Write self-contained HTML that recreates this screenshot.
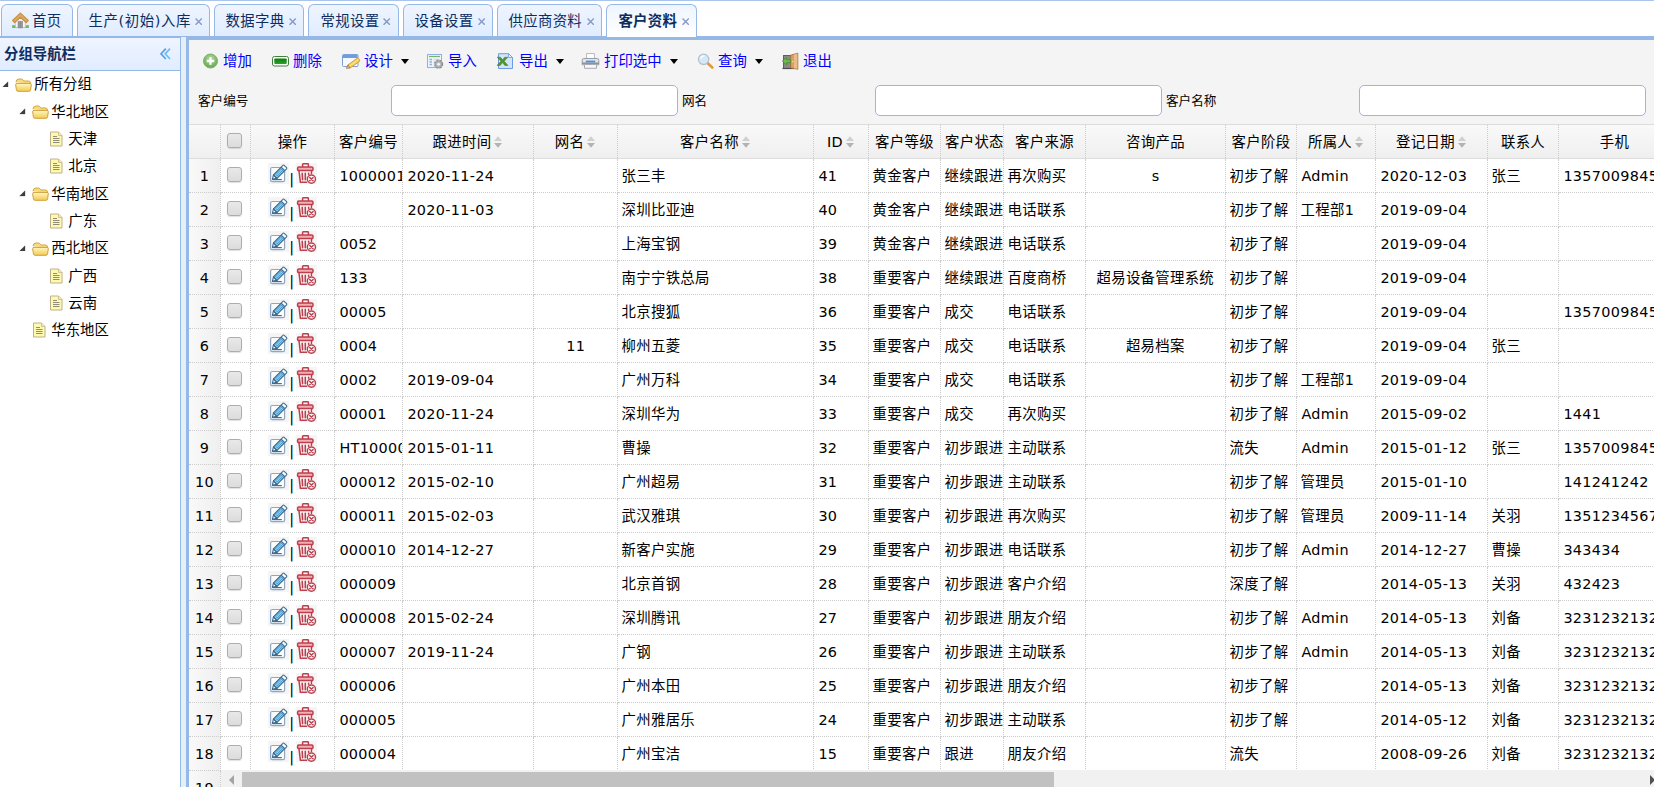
<!DOCTYPE html>
<html lang="zh-CN">
<head>
<meta charset="utf-8">
<title>客户资料</title>
<style>
html,body{margin:0;padding:0}
body{width:1654px;height:787px;overflow:hidden;background:#fff;position:relative;font-family:"DejaVu Sans","Noto Sans CJK SC",sans-serif;font-size:14.4px;color:#000}
div,span,a{box-sizing:border-box}
.abs{position:absolute}
/* tabs */
#tabs{position:absolute;left:0;top:0;width:1654px;height:38px;background:#fff;border-top:1px solid #a9c5ec;border-bottom:2px solid #95b8e7}
.tab{position:absolute;top:3px;height:32px;border:1px solid #95b8e7;border-bottom:0;border-radius:6px 6px 0 0;background:linear-gradient(#eff5ff,#e0ecff);color:#0e2d5f;line-height:33px;white-space:nowrap;font-size:14.4px}
.tab.sel{background:linear-gradient(#eff5ff,#fff);font-weight:bold;height:33px}
.tab span.t{position:absolute;top:0;letter-spacing:.3px}
.tab .x{position:absolute;top:12.5px;width:7.4px;height:7.4px}
/* west */
#west{position:absolute;left:0;top:38px;width:181px;height:749px;border-right:1px solid #95b8e7;background:#fff}
#whead{position:absolute;left:0;top:0;width:180px;height:33px;background:linear-gradient(#eff5ff,#e0ecff);border-bottom:1px solid #95b8e7}
#whead b{position:absolute;left:4px;top:0;line-height:32px;color:#0e2d5f;font-size:14.4px}
#split{position:absolute;left:181px;top:37px;width:5px;height:750px;background:#e6eef8}
.tn{position:absolute;height:22px;line-height:22px;white-space:nowrap;font-size:14.4px}
.ta{position:absolute;top:7.5px;margin-left:-.5px;width:6.5px;height:6.5px}.tf{position:absolute;top:4.5px;width:17px;height:14px}.tfi{position:absolute;top:3px;width:17px;height:16px}
/* center */
#center{position:absolute;left:186px;top:38px;width:1468px;height:749px;border-left:3px solid #95b8e7;border-top:2px solid #95b8e7;background:#fff}
#tb{position:absolute;left:189px;top:40px;width:1465px;height:84px;background:#f4f4f4}
#tbline{position:absolute;left:189px;top:124px;width:1465px;height:1px;background:#ddd}
.btn{position:absolute;top:51px;height:20px;line-height:20px;color:#00f;font-size:14.4px;white-space:nowrap}
.ti{position:absolute;top:51px;width:20px;height:20px}
.arr{position:absolute;top:59px;width:0;height:0;border:4.8px solid transparent;border-top:5px solid #000;border-bottom:0}
.lbl{position:absolute;top:92.5px;font-size:12.6px;line-height:16px;white-space:nowrap}
.inp{position:absolute;top:85px;width:287px;height:31px;border:1px solid #95b8e7;border-radius:5px;background:#fff}
/* grid */
.ghead{position:absolute;left:0;top:125px;width:1654px;height:34px}
#ghbg{position:absolute;left:189px;top:125px;width:1465px;height:34px;background:linear-gradient(#f9f9f9,#efefef);border-bottom:1px solid #ddd}
.hc{position:absolute;top:0;height:33px;border-right:1px dotted #ccc;text-align:center;line-height:35px;white-space:nowrap;overflow:hidden;padding:0 4px;letter-spacing:.3px}
.hc .st{width:10px;height:14px;vertical-align:-2px;margin-left:2px}
.gr{position:absolute;left:0;width:1654px;height:34px}
.c{position:absolute;top:0;height:34px;border-right:1px dotted #ccc;border-bottom:1px dotted #ccc;line-height:34.6px;padding:0 4px 0 3.6px;white-space:nowrap;overflow:hidden;letter-spacing:.3px}
.c.n{letter-spacing:.32px;padding-left:4.4px}.c.ce{text-align:center}
.c.rn{text-align:center;padding:0;background:linear-gradient(90deg,#f9f9f9,#efefef)}
.cb{display:inline-block;width:15px;height:15px;border:1px solid #adadad;border-radius:3px;background:linear-gradient(#e9e9e9,#dcdcdc);vertical-align:-.5px;margin-left:-1.5px;box-shadow:0 1px 1px rgba(0,0,0,.12)}
.ic{width:21px;height:21px;vertical-align:-3.4px}.bar+.ic{margin-left:1px}
.bar{display:inline-block;width:6px;text-align:center;position:relative;top:3px}
#hs{position:absolute;left:221px;top:770px;width:1433px;height:17px;background:#f1f1f1}
#hs i{position:absolute;left:21px;top:2px;width:812px;height:15px;background:#c1c1c1}#hs b{position:absolute;top:5px;width:0;height:0;border:5.5px solid transparent}
</style>
</head>
<body>
<svg width="0" height="0" style="position:absolute">
<defs>
<symbol id="folder" viewBox="0 0 17 14"><defs><linearGradient id="fg" x1="0" y1="0" x2="0" y2="1"><stop offset="0" stop-color="#fff7c4"/><stop offset="1" stop-color="#f2cb52"/></linearGradient></defs><path d="M1 4.2Q1 1.2 4 1H6.4Q7.6 1 8.2 2.2L8.8 3H13.5Q15.4 3 15.5 5V6" fill="#f6dc7c" stroke="#d3a541" stroke-width="1"/><path d="M.7 6.8Q.5 5.4 2 5.4H15Q16.5 5.4 16.3 6.8L15.6 11.8Q15.4 13.3 13.9 13.3H3.1Q1.6 13.3 1.4 11.8Z" fill="url(#fg)" stroke="#cf9f3b" stroke-width="1"/></symbol>
<symbol id="file" viewBox="0 0 17 16"><path d="M2.5 1H10.5L14 4.5V15H2.5Z" fill="#fdfab0" stroke="#bfb08c" stroke-width="1"/><path d="M10.5 1V4.5H14" fill="#f3e9b0" stroke="#c7b68a" stroke-width=".8"/><path d="M5 5.5H9M5 7.5H11.5M5 9.5H11.5M5 11.5H11.5" stroke="#8f8c78" stroke-width="1"/></symbol>
<symbol id="ar" viewBox="0 0 7 7"><path d="M6.8 .2V6.8H.2Z" fill="#3d3d3d"/></symbol>
<symbol id="so" viewBox="0 0 10 14"><path d="M5 1.2L9 6H1Z" fill="#cfcfcf"/><path d="M5 12.8L9 8H1Z" fill="#b3b3b3"/></symbol>
<symbol id="ed" viewBox="0 0 21 21"><rect width="21" height="21" fill="#f5f5f5"/><rect x="2.6" y="4.5" width="14" height="14.2" rx="1.6" fill="#fbfcfd" stroke="#8fa8c1" stroke-width="1.2"/><path d="M4.5 16.6H13.8" stroke="#456f93" stroke-width="1.2"/><path d="M4.4 16.4L5.46 11.8L9 15.34Z" fill="#f4f8fb" stroke="#3a668c" stroke-width="1.1" stroke-linejoin="round"/><path d="M5.46 11.8L13.23 4.03L16.77 7.57L9 15.34Z" fill="#7fd1f7" stroke="#36648b" stroke-width="1.1" stroke-linejoin="round"/><path d="M7.9 11.6L13.3 6.2L14.6 7.5L9.2 12.9Z" fill="none" stroke="#3f8fc2" stroke-width=".8"/><path d="M13.23 4.03L15.1 2.2Q15.6 1.7 16.2 2.3L18.6 4.7Q19.1 5.3 18.6 5.8L16.77 7.57Z" fill="#fdfeff" stroke="#3f6f97" stroke-width="1.1" stroke-linejoin="round"/></symbol>
<symbol id="de" viewBox="0 0 21 21"><rect width="21" height="21" fill="#f5f5f5"/><g fill="none" stroke="#bd3f4e" stroke-width="1.5" stroke-linecap="round"><path d="M6.6 3.6V1.5Q6.6 .8 7.3 .8H11.7Q12.4 .8 12.4 1.5V3.6"/><path d="M3 8L4.4 19.2H10.6"/><path d="M15.6 8L15.4 10.4"/><path d="M6.2 10.4L6.6 16.8M9.3 10.4V16.8M12.6 10.4V11.2" stroke-width="1.6"/><circle cx="15.4" cy="16.1" r="4.1" stroke-width="1.4"/><path d="M13.7 14.4L17.1 17.8M17.1 14.4L13.7 17.8" stroke-width="1.4"/></g><rect x="1.6" y="4.1" width="15.4" height="3.5" rx="1.2" fill="#f4adb0" stroke="#bd3f4e" stroke-width="1.5"/></symbol>
</defs>
</svg>
<div id="tabs">
<div class="tab" style="left:1px;width:72px"><span class="t" style="left:30px">首页</span></div>
<div class="tab" style="left:77px;width:133px"><span class="t" style="left:10.6px;letter-spacing:.6px">生产(初始)入库</span><svg class="x" style="left:116.7px" viewBox="0 0 8 8"><path d="M.6 .6L7.4 7.4M7.4 .6L.6 7.4" stroke="#8799c6" stroke-width="1.5"/></svg></div>
<div class="tab" style="left:214px;width:90px"><span class="t" style="left:10.6px">数据字典</span><svg class="x" style="left:73.7px" viewBox="0 0 8 8"><path d="M.6 .6L7.4 7.4M7.4 .6L.6 7.4" stroke="#8799c6" stroke-width="1.5"/></svg></div>
<div class="tab" style="left:308px;width:91px"><span class="t" style="left:11.6px">常规设置</span><svg class="x" style="left:74.2px" viewBox="0 0 8 8"><path d="M.6 .6L7.4 7.4M7.4 .6L.6 7.4" stroke="#8799c6" stroke-width="1.5"/></svg></div>
<div class="tab" style="left:403px;width:90px"><span class="t" style="left:10.6px">设备设置</span><svg class="x" style="left:73.7px" viewBox="0 0 8 8"><path d="M.6 .6L7.4 7.4M7.4 .6L.6 7.4" stroke="#8799c6" stroke-width="1.5"/></svg></div>
<div class="tab" style="left:497px;width:105px"><span class="t" style="left:10.6px">供应商资料</span><svg class="x" style="left:88.7px" viewBox="0 0 8 8"><path d="M.6 .6L7.4 7.4M7.4 .6L.6 7.4" stroke="#8799c6" stroke-width="1.5"/></svg></div>
<div class="tab sel" style="left:606px;width:91px"><span class="t" style="left:11.4px">客户资料</span><svg class="x" style="left:74.7px" viewBox="0 0 8 8"><path d="M.6 .6L7.4 7.4M7.4 .6L.6 7.4" stroke="#8799c6" stroke-width="1.5"/></svg></div>
</div>
<svg style="position:absolute;left:11px;top:12px;width:19px;height:17px" viewBox="0 0 19 17"><path d="M1.2 13.2Q3.6 12.6 5.8 14.6L6 16H1.2ZM17.8 13.2Q15.4 12.6 13.2 14.6L13 16H17.8Z" fill="#6db85a"/><path d="M4.4 8.4L9.4 3.6L14.4 8.4V15.6H4.4Z" fill="#f4f4f4" stroke="#b9b9b9" stroke-width=".7"/><path d="M7.1 9.4H11.5V15.8H7.1Z" fill="#9a9a9a" stroke="#7c7c7c" stroke-width=".6"/><path d="M9.3 9.6V15.6" stroke="#7a7a7a" stroke-width=".6"/><path d="M1.6 8.4L9.4 1.1L17.2 8.4L15.2 10.6L9.4 5.2L3.6 10.6Z" fill="#dcaa62" stroke="#c89048" stroke-width="1.3" stroke-linejoin="round"/></svg>
<div id="west">
<div id="whead"><b>分组导航栏</b><svg style="position:absolute;left:160px;top:10px;width:14px;height:12px" viewBox="0 0 14 12"><path d="M5.8 .6L1 5.8L5.8 11" fill="none" stroke="#5a9fe2" stroke-width="1.7"/><path d="M10 .6L5.2 5.8L10 11" fill="none" stroke="#6bbcf6" stroke-width="1.7"/></svg></div>
</div>
<div id="split"></div>
<div id="center"></div>
<div id="tb"></div><div id="tbline"></div>
<svg class="ti" style="left:201px" viewBox="0 0 20 20"><defs><radialGradient id="ga" cx=".5" cy=".35" r=".7"><stop offset="0" stop-color="#b5dca4"/><stop offset="1" stop-color="#5ea04a"/></radialGradient></defs><circle cx="9.5" cy="10" r="7" fill="url(#ga)" stroke="#7db36b" stroke-width="1"/><path d="M9.5 6.3V13.7M5.8 10H13.2" stroke="#fff" stroke-width="2.3"/></svg>
<a class="btn" style="left:223px">增加</a>
<svg class="ti" style="left:271px" viewBox="0 0 20 20"><defs><linearGradient id="gr" x1="0" y1="0" x2="0" y2="1"><stop offset="0" stop-color="#0a7a0a"/><stop offset="1" stop-color="#2ba32b"/></linearGradient></defs><rect x="1.5" y="5.5" width="16" height="9.5" rx="2" fill="#fff" stroke="#3f7f3f" stroke-width="1"/><rect x="3.3" y="7.4" width="12.4" height="5.7" rx=".8" fill="url(#gr)"/></svg>
<a class="btn" style="left:293px">删除</a>
<svg class="ti" style="left:341px" viewBox="0 0 20 20"><rect x="1.5" y="3.5" width="15.5" height="12" rx="1" fill="#f6f9fd" stroke="#7d9fd2"/><rect x="2" y="4" width="14.5" height="3" fill="#6d9ee4"/><path d="M6.9 13.9L16.6 6.95Q18.6 7.6 18.8 10.05L9.1 17Z" fill="#f8d256" stroke="#cf9630" stroke-width=".9" stroke-linejoin="round"/><path d="M8 15.4L17.6 8.6" stroke="#fbe79a" stroke-width="1"/><path d="M5.4 17.4L6.9 13.9L9.1 17Z" fill="#e6c39a" stroke="#a46c36" stroke-width=".7" stroke-linejoin="round"/></svg>
<a class="btn" style="left:364px">设计</a><i class="arr" style="left:401px"></i>
<svg class="ti" style="left:426px" viewBox="0 0 20 20"><rect x="1.5" y="3.5" width="14" height="13" fill="#eef4fc" stroke="#8fb0e0"/><path d="M3 5.5H14" stroke="#79b562" stroke-width="1.2"/><path d="M3.5 8.5H6M3.5 11H6M3.5 13.5H6" stroke="#8fb0e0" stroke-width="1.4"/><path d="M7.5 8.5H13.5M7.5 11H10M7.5 13.5H9" stroke="#c9dbf3" stroke-width="1.4"/><circle cx="12.6" cy="13.2" r="3.6" fill="#c4c4c4" stroke="#8e8e8e" stroke-width="2" stroke-dasharray="1.9 1"/><circle cx="12.6" cy="13.2" r="3.1" fill="#bdbdbd" stroke="#9a9a9a" stroke-width=".8"/><circle cx="12.6" cy="13.2" r="1.3" fill="#f4f8ff"/></svg>
<a class="btn" style="left:448px">导入</a>
<svg class="ti" style="left:496px" viewBox="0 0 20 20"><path d="M2.5 2.7H12.5L16.5 6.5V17.5H2.5Z" fill="#d3e3f8" stroke="#6f9be0"/><path d="M12.5 2.7V6.5H16.5Z" fill="#f1f6fd" stroke="#6f9be0" stroke-width=".8"/><path d="M1.2 6.2H4.4L6.6 8.8L8.8 6.2H11.8L8.2 10.2L12 14.4H8.8L6.5 11.6L4.2 14.4H1L4.9 10.2Z" fill="#4f962f" stroke="#3b7a22" stroke-width=".5"/></svg>
<a class="btn" style="left:519px">导出</a><i class="arr" style="left:556px"></i>
<svg class="ti" style="left:581px" viewBox="0 0 20 20"><path d="M5.5 2.5H13.5V8H5.5Z" fill="#fdfdfd" stroke="#b9bcc2"/><path d="M2.8 7.5H16.2Q17.8 7.5 17.8 9.2V13.8H1.2V9.2Q1.2 7.5 2.8 7.5Z" fill="#e3e4e8" stroke="#9a9ca3"/><path d="M4.8 9.6H14.2V11.4H4.8Z" fill="#3a97ea"/><path d="M1.2 12.2H17.8" stroke="#7b7d84" stroke-width="1.2"/><path d="M3.5 13.5H15.5V17.3H3.5Z" fill="#f7f7f7" stroke="#a9abb2"/></svg>
<a class="btn" style="left:604px">打印选中</a><i class="arr" style="left:670px"></i>
<svg class="ti" style="left:696px" viewBox="0 0 20 20"><path d="M11.5 12L16.3 16.5" stroke="#e09a3a" stroke-width="2.6" stroke-linecap="round"/><circle cx="7.6" cy="8.3" r="5.2" fill="#d3e9fb" stroke="#b4c0cc" stroke-width="1.3"/><path d="M4.6 7.6Q5.4 4.9 8.4 4.9" stroke="#fff" stroke-width="1.4" fill="none"/></svg>
<a class="btn" style="left:718px">查询</a><i class="arr" style="left:755px"></i>
<svg class="ti" style="left:781px" viewBox="0 0 20 20"><rect x="2.5" y="4.5" width="9" height="13" fill="#8a8a8a" stroke="#5f5f5f"/><path d="M1.5 17.5H13" stroke="#4c4c4c" stroke-width="1.2"/><path d="M9.6 4.2L16.8 2.2V18.2L9.6 17Z" fill="#d9a066" stroke="#a86f33" stroke-width=".9"/><path d="M13 3.4L16.4 2.5V17.8L13 17.3Z" fill="#e8bd8a"/><circle cx="11.6" cy="10.6" r=".8" fill="#f5e08a"/><path d="M1.3 10.2L5.6 6.6V8.8H9.6V11.6H5.6V13.8Z" fill="#6cc04a" stroke="#3e8a2a" stroke-width=".7"/></svg>
<a class="btn" style="left:803px">退出</a>
<span class="lbl" style="left:198px">客户编号</span><div class="inp" style="left:391px"></div>
<span class="lbl" style="left:682px">网名</span><div class="inp" style="left:875px"></div>
<span class="lbl" style="left:1166px">客户名称</span><div class="inp" style="left:1359px"></div>
<div id="ghbg"></div>
<div class="tn" style="top:73.4px;left:0">
<svg class="ta" style="left:2.5px"><use href="#ar"/></svg><svg class="tf" style="left:15.0px"><use href="#folder"/></svg>
<span style="position:absolute;left:34.3px">所有分组</span></div>
<div class="tn" style="top:100.7px;left:0">
<svg class="ta" style="left:19.5px"><use href="#ar"/></svg><svg class="tf" style="left:32.0px"><use href="#folder"/></svg>
<span style="position:absolute;left:51.3px">华北地区</span></div>
<div class="tn" style="top:128.0px;left:0">
<svg class="tfi" style="left:48.0px"><use href="#file"/></svg>
<span style="position:absolute;left:68.3px">天津</span></div>
<div class="tn" style="top:155.3px;left:0">
<svg class="tfi" style="left:48.0px"><use href="#file"/></svg>
<span style="position:absolute;left:68.3px">北京</span></div>
<div class="tn" style="top:182.6px;left:0">
<svg class="ta" style="left:19.5px"><use href="#ar"/></svg><svg class="tf" style="left:32.0px"><use href="#folder"/></svg>
<span style="position:absolute;left:51.3px">华南地区</span></div>
<div class="tn" style="top:209.9px;left:0">
<svg class="tfi" style="left:48.0px"><use href="#file"/></svg>
<span style="position:absolute;left:68.3px">广东</span></div>
<div class="tn" style="top:237.2px;left:0">
<svg class="ta" style="left:19.5px"><use href="#ar"/></svg><svg class="tf" style="left:32.0px"><use href="#folder"/></svg>
<span style="position:absolute;left:51.3px">西北地区</span></div>
<div class="tn" style="top:264.5px;left:0">
<svg class="tfi" style="left:48.0px"><use href="#file"/></svg>
<span style="position:absolute;left:68.3px">广西</span></div>
<div class="tn" style="top:291.8px;left:0">
<svg class="tfi" style="left:48.0px"><use href="#file"/></svg>
<span style="position:absolute;left:68.3px">云南</span></div>
<div class="tn" style="top:319.1px;left:0">
<svg class="tfi" style="left:31.0px"><use href="#file"/></svg>
<span style="position:absolute;left:51.3px">华东地区</span></div><div class="ghead">
<div class="hc" style="left:189px;width:32px"><span></span></div>
<div class="hc" style="left:221px;width:30px"><span class="cb"></span></div>
<div class="hc" style="left:251px;width:84px"><span>操作</span></div>
<div class="hc" style="left:335px;width:68px"><span>客户编号</span></div>
<div class="hc" style="left:403px;width:131px"><span>跟进时间</span><svg class="st"><use href="#so"/></svg></div>
<div class="hc" style="left:534px;width:84px"><span>网名</span><svg class="st"><use href="#so"/></svg></div>
<div class="hc" style="left:618px;width:196px"><span>客户名称</span><svg class="st"><use href="#so"/></svg></div>
<div class="hc" style="left:814px;width:55px"><span>ID</span><svg class="st"><use href="#so"/></svg></div>
<div class="hc" style="left:869px;width:72px"><span>客户等级</span></div>
<div class="hc" style="left:941px;width:63px"><span>客户状态</span></div>
<div class="hc" style="left:1004px;width:82px"><span>客户来源</span></div>
<div class="hc" style="left:1086px;width:140px"><span>咨询产品</span></div>
<div class="hc" style="left:1226px;width:71px"><span>客户阶段</span></div>
<div class="hc" style="left:1297px;width:79px"><span>所属人</span><svg class="st"><use href="#so"/></svg></div>
<div class="hc" style="left:1376px;width:112px"><span>登记日期</span><svg class="st"><use href="#so"/></svg></div>
<div class="hc" style="left:1488px;width:71px"><span>联系人</span></div>
<div class="hc" style="left:1559px;width:112px"><span>手机</span></div>
</div>
<div class="gr" style="top:159px">
<div class="c rn" style="left:189px;width:32px">1</div>
<div class="c ce" style="left:221px;width:30px"><span class="cb"></span></div>
<div class="c ce" style="left:251px;width:84px"><svg class="ic"><use href="#ed"/></svg><span class="bar">|</span><svg class="ic"><use href="#de"/></svg></div>
<div class="c n" style="left:335px;width:68px">1000001</div>
<div class="c n" style="left:403px;width:131px">2020-11-24</div>
<div class="c ce" style="left:534px;width:84px"></div>
<div class="c" style="left:618px;width:196px">张三丰</div>
<div class="c n" style="left:814px;width:55px">41</div>
<div class="c" style="left:869px;width:72px">黄金客户</div>
<div class="c" style="left:941px;width:63px">继续跟进</div>
<div class="c" style="left:1004px;width:82px">再次购买</div>
<div class="c n ce" style="left:1086px;width:140px">s</div>
<div class="c" style="left:1226px;width:71px">初步了解</div>
<div class="c n" style="left:1297px;width:79px">Admin</div>
<div class="c n" style="left:1376px;width:112px">2020-12-03</div>
<div class="c" style="left:1488px;width:71px">张三</div>
<div class="c n" style="left:1559px;width:112px">13570098451</div>
</div>
<div class="gr" style="top:193px">
<div class="c rn" style="left:189px;width:32px">2</div>
<div class="c ce" style="left:221px;width:30px"><span class="cb"></span></div>
<div class="c ce" style="left:251px;width:84px"><svg class="ic"><use href="#ed"/></svg><span class="bar">|</span><svg class="ic"><use href="#de"/></svg></div>
<div class="c" style="left:335px;width:68px"></div>
<div class="c n" style="left:403px;width:131px">2020-11-03</div>
<div class="c ce" style="left:534px;width:84px"></div>
<div class="c" style="left:618px;width:196px">深圳比亚迪</div>
<div class="c n" style="left:814px;width:55px">40</div>
<div class="c" style="left:869px;width:72px">黄金客户</div>
<div class="c" style="left:941px;width:63px">继续跟进</div>
<div class="c" style="left:1004px;width:82px">电话联系</div>
<div class="c ce" style="left:1086px;width:140px"></div>
<div class="c" style="left:1226px;width:71px">初步了解</div>
<div class="c" style="left:1297px;width:79px">工程部1</div>
<div class="c n" style="left:1376px;width:112px">2019-09-04</div>
<div class="c" style="left:1488px;width:71px"></div>
<div class="c" style="left:1559px;width:112px"></div>
</div>
<div class="gr" style="top:227px">
<div class="c rn" style="left:189px;width:32px">3</div>
<div class="c ce" style="left:221px;width:30px"><span class="cb"></span></div>
<div class="c ce" style="left:251px;width:84px"><svg class="ic"><use href="#ed"/></svg><span class="bar">|</span><svg class="ic"><use href="#de"/></svg></div>
<div class="c n" style="left:335px;width:68px">0052</div>
<div class="c" style="left:403px;width:131px"></div>
<div class="c ce" style="left:534px;width:84px"></div>
<div class="c" style="left:618px;width:196px">上海宝钢</div>
<div class="c n" style="left:814px;width:55px">39</div>
<div class="c" style="left:869px;width:72px">黄金客户</div>
<div class="c" style="left:941px;width:63px">继续跟进</div>
<div class="c" style="left:1004px;width:82px">电话联系</div>
<div class="c ce" style="left:1086px;width:140px"></div>
<div class="c" style="left:1226px;width:71px">初步了解</div>
<div class="c" style="left:1297px;width:79px"></div>
<div class="c n" style="left:1376px;width:112px">2019-09-04</div>
<div class="c" style="left:1488px;width:71px"></div>
<div class="c" style="left:1559px;width:112px"></div>
</div>
<div class="gr" style="top:261px">
<div class="c rn" style="left:189px;width:32px">4</div>
<div class="c ce" style="left:221px;width:30px"><span class="cb"></span></div>
<div class="c ce" style="left:251px;width:84px"><svg class="ic"><use href="#ed"/></svg><span class="bar">|</span><svg class="ic"><use href="#de"/></svg></div>
<div class="c n" style="left:335px;width:68px">133</div>
<div class="c" style="left:403px;width:131px"></div>
<div class="c ce" style="left:534px;width:84px"></div>
<div class="c" style="left:618px;width:196px">南宁宁铁总局</div>
<div class="c n" style="left:814px;width:55px">38</div>
<div class="c" style="left:869px;width:72px">重要客户</div>
<div class="c" style="left:941px;width:63px">继续跟进</div>
<div class="c" style="left:1004px;width:82px">百度商桥</div>
<div class="c ce" style="left:1086px;width:140px">超易设备管理系统</div>
<div class="c" style="left:1226px;width:71px">初步了解</div>
<div class="c" style="left:1297px;width:79px"></div>
<div class="c n" style="left:1376px;width:112px">2019-09-04</div>
<div class="c" style="left:1488px;width:71px"></div>
<div class="c" style="left:1559px;width:112px"></div>
</div>
<div class="gr" style="top:295px">
<div class="c rn" style="left:189px;width:32px">5</div>
<div class="c ce" style="left:221px;width:30px"><span class="cb"></span></div>
<div class="c ce" style="left:251px;width:84px"><svg class="ic"><use href="#ed"/></svg><span class="bar">|</span><svg class="ic"><use href="#de"/></svg></div>
<div class="c n" style="left:335px;width:68px">00005</div>
<div class="c" style="left:403px;width:131px"></div>
<div class="c ce" style="left:534px;width:84px"></div>
<div class="c" style="left:618px;width:196px">北京搜狐</div>
<div class="c n" style="left:814px;width:55px">36</div>
<div class="c" style="left:869px;width:72px">重要客户</div>
<div class="c" style="left:941px;width:63px">成交</div>
<div class="c" style="left:1004px;width:82px">电话联系</div>
<div class="c ce" style="left:1086px;width:140px"></div>
<div class="c" style="left:1226px;width:71px">初步了解</div>
<div class="c" style="left:1297px;width:79px"></div>
<div class="c n" style="left:1376px;width:112px">2019-09-04</div>
<div class="c" style="left:1488px;width:71px"></div>
<div class="c n" style="left:1559px;width:112px">13570098451</div>
</div>
<div class="gr" style="top:329px">
<div class="c rn" style="left:189px;width:32px">6</div>
<div class="c ce" style="left:221px;width:30px"><span class="cb"></span></div>
<div class="c ce" style="left:251px;width:84px"><svg class="ic"><use href="#ed"/></svg><span class="bar">|</span><svg class="ic"><use href="#de"/></svg></div>
<div class="c n" style="left:335px;width:68px">0004</div>
<div class="c" style="left:403px;width:131px"></div>
<div class="c n ce" style="left:534px;width:84px">11</div>
<div class="c" style="left:618px;width:196px">柳州五菱</div>
<div class="c n" style="left:814px;width:55px">35</div>
<div class="c" style="left:869px;width:72px">重要客户</div>
<div class="c" style="left:941px;width:63px">成交</div>
<div class="c" style="left:1004px;width:82px">电话联系</div>
<div class="c ce" style="left:1086px;width:140px">超易档案</div>
<div class="c" style="left:1226px;width:71px">初步了解</div>
<div class="c" style="left:1297px;width:79px"></div>
<div class="c n" style="left:1376px;width:112px">2019-09-04</div>
<div class="c" style="left:1488px;width:71px">张三</div>
<div class="c" style="left:1559px;width:112px"></div>
</div>
<div class="gr" style="top:363px">
<div class="c rn" style="left:189px;width:32px">7</div>
<div class="c ce" style="left:221px;width:30px"><span class="cb"></span></div>
<div class="c ce" style="left:251px;width:84px"><svg class="ic"><use href="#ed"/></svg><span class="bar">|</span><svg class="ic"><use href="#de"/></svg></div>
<div class="c n" style="left:335px;width:68px">0002</div>
<div class="c n" style="left:403px;width:131px">2019-09-04</div>
<div class="c ce" style="left:534px;width:84px"></div>
<div class="c" style="left:618px;width:196px">广州万科</div>
<div class="c n" style="left:814px;width:55px">34</div>
<div class="c" style="left:869px;width:72px">重要客户</div>
<div class="c" style="left:941px;width:63px">成交</div>
<div class="c" style="left:1004px;width:82px">电话联系</div>
<div class="c ce" style="left:1086px;width:140px"></div>
<div class="c" style="left:1226px;width:71px">初步了解</div>
<div class="c" style="left:1297px;width:79px">工程部1</div>
<div class="c n" style="left:1376px;width:112px">2019-09-04</div>
<div class="c" style="left:1488px;width:71px"></div>
<div class="c" style="left:1559px;width:112px"></div>
</div>
<div class="gr" style="top:397px">
<div class="c rn" style="left:189px;width:32px">8</div>
<div class="c ce" style="left:221px;width:30px"><span class="cb"></span></div>
<div class="c ce" style="left:251px;width:84px"><svg class="ic"><use href="#ed"/></svg><span class="bar">|</span><svg class="ic"><use href="#de"/></svg></div>
<div class="c n" style="left:335px;width:68px">00001</div>
<div class="c n" style="left:403px;width:131px">2020-11-24</div>
<div class="c ce" style="left:534px;width:84px"></div>
<div class="c" style="left:618px;width:196px">深圳华为</div>
<div class="c n" style="left:814px;width:55px">33</div>
<div class="c" style="left:869px;width:72px">重要客户</div>
<div class="c" style="left:941px;width:63px">成交</div>
<div class="c" style="left:1004px;width:82px">再次购买</div>
<div class="c ce" style="left:1086px;width:140px"></div>
<div class="c" style="left:1226px;width:71px">初步了解</div>
<div class="c n" style="left:1297px;width:79px">Admin</div>
<div class="c n" style="left:1376px;width:112px">2015-09-02</div>
<div class="c" style="left:1488px;width:71px"></div>
<div class="c n" style="left:1559px;width:112px">1441</div>
</div>
<div class="gr" style="top:431px">
<div class="c rn" style="left:189px;width:32px">9</div>
<div class="c ce" style="left:221px;width:30px"><span class="cb"></span></div>
<div class="c ce" style="left:251px;width:84px"><svg class="ic"><use href="#ed"/></svg><span class="bar">|</span><svg class="ic"><use href="#de"/></svg></div>
<div class="c n" style="left:335px;width:68px">HT100001</div>
<div class="c n" style="left:403px;width:131px">2015-01-11</div>
<div class="c ce" style="left:534px;width:84px"></div>
<div class="c" style="left:618px;width:196px">曹操</div>
<div class="c n" style="left:814px;width:55px">32</div>
<div class="c" style="left:869px;width:72px">重要客户</div>
<div class="c" style="left:941px;width:63px">初步跟进</div>
<div class="c" style="left:1004px;width:82px">主动联系</div>
<div class="c ce" style="left:1086px;width:140px"></div>
<div class="c" style="left:1226px;width:71px">流失</div>
<div class="c n" style="left:1297px;width:79px">Admin</div>
<div class="c n" style="left:1376px;width:112px">2015-01-12</div>
<div class="c" style="left:1488px;width:71px">张三</div>
<div class="c n" style="left:1559px;width:112px">13570098451</div>
</div>
<div class="gr" style="top:465px">
<div class="c rn" style="left:189px;width:32px">10</div>
<div class="c ce" style="left:221px;width:30px"><span class="cb"></span></div>
<div class="c ce" style="left:251px;width:84px"><svg class="ic"><use href="#ed"/></svg><span class="bar">|</span><svg class="ic"><use href="#de"/></svg></div>
<div class="c n" style="left:335px;width:68px">000012</div>
<div class="c n" style="left:403px;width:131px">2015-02-10</div>
<div class="c ce" style="left:534px;width:84px"></div>
<div class="c" style="left:618px;width:196px">广州超易</div>
<div class="c n" style="left:814px;width:55px">31</div>
<div class="c" style="left:869px;width:72px">重要客户</div>
<div class="c" style="left:941px;width:63px">初步跟进</div>
<div class="c" style="left:1004px;width:82px">主动联系</div>
<div class="c ce" style="left:1086px;width:140px"></div>
<div class="c" style="left:1226px;width:71px">初步了解</div>
<div class="c" style="left:1297px;width:79px">管理员</div>
<div class="c n" style="left:1376px;width:112px">2015-01-10</div>
<div class="c" style="left:1488px;width:71px"></div>
<div class="c n" style="left:1559px;width:112px">141241242</div>
</div>
<div class="gr" style="top:499px">
<div class="c rn" style="left:189px;width:32px">11</div>
<div class="c ce" style="left:221px;width:30px"><span class="cb"></span></div>
<div class="c ce" style="left:251px;width:84px"><svg class="ic"><use href="#ed"/></svg><span class="bar">|</span><svg class="ic"><use href="#de"/></svg></div>
<div class="c n" style="left:335px;width:68px">000011</div>
<div class="c n" style="left:403px;width:131px">2015-02-03</div>
<div class="c ce" style="left:534px;width:84px"></div>
<div class="c" style="left:618px;width:196px">武汉雅琪</div>
<div class="c n" style="left:814px;width:55px">30</div>
<div class="c" style="left:869px;width:72px">重要客户</div>
<div class="c" style="left:941px;width:63px">初步跟进</div>
<div class="c" style="left:1004px;width:82px">再次购买</div>
<div class="c ce" style="left:1086px;width:140px"></div>
<div class="c" style="left:1226px;width:71px">初步了解</div>
<div class="c" style="left:1297px;width:79px">管理员</div>
<div class="c n" style="left:1376px;width:112px">2009-11-14</div>
<div class="c" style="left:1488px;width:71px">关羽</div>
<div class="c n" style="left:1559px;width:112px">13512345678</div>
</div>
<div class="gr" style="top:533px">
<div class="c rn" style="left:189px;width:32px">12</div>
<div class="c ce" style="left:221px;width:30px"><span class="cb"></span></div>
<div class="c ce" style="left:251px;width:84px"><svg class="ic"><use href="#ed"/></svg><span class="bar">|</span><svg class="ic"><use href="#de"/></svg></div>
<div class="c n" style="left:335px;width:68px">000010</div>
<div class="c n" style="left:403px;width:131px">2014-12-27</div>
<div class="c ce" style="left:534px;width:84px"></div>
<div class="c" style="left:618px;width:196px">新客户实施</div>
<div class="c n" style="left:814px;width:55px">29</div>
<div class="c" style="left:869px;width:72px">重要客户</div>
<div class="c" style="left:941px;width:63px">初步跟进</div>
<div class="c" style="left:1004px;width:82px">电话联系</div>
<div class="c ce" style="left:1086px;width:140px"></div>
<div class="c" style="left:1226px;width:71px">初步了解</div>
<div class="c n" style="left:1297px;width:79px">Admin</div>
<div class="c n" style="left:1376px;width:112px">2014-12-27</div>
<div class="c" style="left:1488px;width:71px">曹操</div>
<div class="c n" style="left:1559px;width:112px">343434</div>
</div>
<div class="gr" style="top:567px">
<div class="c rn" style="left:189px;width:32px">13</div>
<div class="c ce" style="left:221px;width:30px"><span class="cb"></span></div>
<div class="c ce" style="left:251px;width:84px"><svg class="ic"><use href="#ed"/></svg><span class="bar">|</span><svg class="ic"><use href="#de"/></svg></div>
<div class="c n" style="left:335px;width:68px">000009</div>
<div class="c" style="left:403px;width:131px"></div>
<div class="c ce" style="left:534px;width:84px"></div>
<div class="c" style="left:618px;width:196px">北京首钢</div>
<div class="c n" style="left:814px;width:55px">28</div>
<div class="c" style="left:869px;width:72px">重要客户</div>
<div class="c" style="left:941px;width:63px">初步跟进</div>
<div class="c" style="left:1004px;width:82px">客户介绍</div>
<div class="c ce" style="left:1086px;width:140px"></div>
<div class="c" style="left:1226px;width:71px">深度了解</div>
<div class="c" style="left:1297px;width:79px"></div>
<div class="c n" style="left:1376px;width:112px">2014-05-13</div>
<div class="c" style="left:1488px;width:71px">关羽</div>
<div class="c n" style="left:1559px;width:112px">432423</div>
</div>
<div class="gr" style="top:601px">
<div class="c rn" style="left:189px;width:32px">14</div>
<div class="c ce" style="left:221px;width:30px"><span class="cb"></span></div>
<div class="c ce" style="left:251px;width:84px"><svg class="ic"><use href="#ed"/></svg><span class="bar">|</span><svg class="ic"><use href="#de"/></svg></div>
<div class="c n" style="left:335px;width:68px">000008</div>
<div class="c n" style="left:403px;width:131px">2015-02-24</div>
<div class="c ce" style="left:534px;width:84px"></div>
<div class="c" style="left:618px;width:196px">深圳腾讯</div>
<div class="c n" style="left:814px;width:55px">27</div>
<div class="c" style="left:869px;width:72px">重要客户</div>
<div class="c" style="left:941px;width:63px">初步跟进</div>
<div class="c" style="left:1004px;width:82px">朋友介绍</div>
<div class="c ce" style="left:1086px;width:140px"></div>
<div class="c" style="left:1226px;width:71px">初步了解</div>
<div class="c n" style="left:1297px;width:79px">Admin</div>
<div class="c n" style="left:1376px;width:112px">2014-05-13</div>
<div class="c" style="left:1488px;width:71px">刘备</div>
<div class="c n" style="left:1559px;width:112px">32312321321</div>
</div>
<div class="gr" style="top:635px">
<div class="c rn" style="left:189px;width:32px">15</div>
<div class="c ce" style="left:221px;width:30px"><span class="cb"></span></div>
<div class="c ce" style="left:251px;width:84px"><svg class="ic"><use href="#ed"/></svg><span class="bar">|</span><svg class="ic"><use href="#de"/></svg></div>
<div class="c n" style="left:335px;width:68px">000007</div>
<div class="c n" style="left:403px;width:131px">2019-11-24</div>
<div class="c ce" style="left:534px;width:84px"></div>
<div class="c" style="left:618px;width:196px">广钢</div>
<div class="c n" style="left:814px;width:55px">26</div>
<div class="c" style="left:869px;width:72px">重要客户</div>
<div class="c" style="left:941px;width:63px">初步跟进</div>
<div class="c" style="left:1004px;width:82px">主动联系</div>
<div class="c ce" style="left:1086px;width:140px"></div>
<div class="c" style="left:1226px;width:71px">初步了解</div>
<div class="c n" style="left:1297px;width:79px">Admin</div>
<div class="c n" style="left:1376px;width:112px">2014-05-13</div>
<div class="c" style="left:1488px;width:71px">刘备</div>
<div class="c n" style="left:1559px;width:112px">32312321321</div>
</div>
<div class="gr" style="top:669px">
<div class="c rn" style="left:189px;width:32px">16</div>
<div class="c ce" style="left:221px;width:30px"><span class="cb"></span></div>
<div class="c ce" style="left:251px;width:84px"><svg class="ic"><use href="#ed"/></svg><span class="bar">|</span><svg class="ic"><use href="#de"/></svg></div>
<div class="c n" style="left:335px;width:68px">000006</div>
<div class="c" style="left:403px;width:131px"></div>
<div class="c ce" style="left:534px;width:84px"></div>
<div class="c" style="left:618px;width:196px">广州本田</div>
<div class="c n" style="left:814px;width:55px">25</div>
<div class="c" style="left:869px;width:72px">重要客户</div>
<div class="c" style="left:941px;width:63px">初步跟进</div>
<div class="c" style="left:1004px;width:82px">朋友介绍</div>
<div class="c ce" style="left:1086px;width:140px"></div>
<div class="c" style="left:1226px;width:71px">初步了解</div>
<div class="c" style="left:1297px;width:79px"></div>
<div class="c n" style="left:1376px;width:112px">2014-05-13</div>
<div class="c" style="left:1488px;width:71px">刘备</div>
<div class="c n" style="left:1559px;width:112px">32312321321</div>
</div>
<div class="gr" style="top:703px">
<div class="c rn" style="left:189px;width:32px">17</div>
<div class="c ce" style="left:221px;width:30px"><span class="cb"></span></div>
<div class="c ce" style="left:251px;width:84px"><svg class="ic"><use href="#ed"/></svg><span class="bar">|</span><svg class="ic"><use href="#de"/></svg></div>
<div class="c n" style="left:335px;width:68px">000005</div>
<div class="c" style="left:403px;width:131px"></div>
<div class="c ce" style="left:534px;width:84px"></div>
<div class="c" style="left:618px;width:196px">广州雅居乐</div>
<div class="c n" style="left:814px;width:55px">24</div>
<div class="c" style="left:869px;width:72px">重要客户</div>
<div class="c" style="left:941px;width:63px">初步跟进</div>
<div class="c" style="left:1004px;width:82px">主动联系</div>
<div class="c ce" style="left:1086px;width:140px"></div>
<div class="c" style="left:1226px;width:71px">初步了解</div>
<div class="c" style="left:1297px;width:79px"></div>
<div class="c n" style="left:1376px;width:112px">2014-05-12</div>
<div class="c" style="left:1488px;width:71px">刘备</div>
<div class="c n" style="left:1559px;width:112px">32312321321</div>
</div>
<div class="gr" style="top:737px">
<div class="c rn" style="left:189px;width:32px">18</div>
<div class="c ce" style="left:221px;width:30px"><span class="cb"></span></div>
<div class="c ce" style="left:251px;width:84px"><svg class="ic"><use href="#ed"/></svg><span class="bar">|</span><svg class="ic"><use href="#de"/></svg></div>
<div class="c n" style="left:335px;width:68px">000004</div>
<div class="c" style="left:403px;width:131px"></div>
<div class="c ce" style="left:534px;width:84px"></div>
<div class="c" style="left:618px;width:196px">广州宝洁</div>
<div class="c n" style="left:814px;width:55px">15</div>
<div class="c" style="left:869px;width:72px">重要客户</div>
<div class="c" style="left:941px;width:63px">跟进</div>
<div class="c" style="left:1004px;width:82px">朋友介绍</div>
<div class="c ce" style="left:1086px;width:140px"></div>
<div class="c" style="left:1226px;width:71px">流失</div>
<div class="c" style="left:1297px;width:79px"></div>
<div class="c n" style="left:1376px;width:112px">2008-09-26</div>
<div class="c" style="left:1488px;width:71px">刘备</div>
<div class="c n" style="left:1559px;width:112px">32312321321</div>
</div>
<div class="gr" style="top:771px"><div class="c rn" style="left:189px;width:32px">19</div></div><div id="hs"><i></i><b style="left:8px;border-right-color:#a3a3a3;border-left-width:0"></b><b style="left:1429px;border-left-color:#505050;border-right-width:0"></b></div>
</body>
</html>
